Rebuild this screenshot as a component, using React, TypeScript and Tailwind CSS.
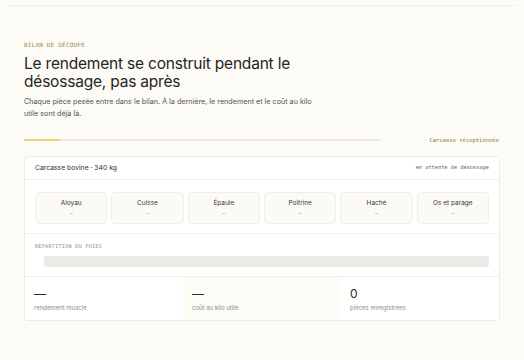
import React from "react";

const pieces = ["Aloyau", "Cuisse", "Épaule", "Poitrine", "Haché", "Os et parage"];

const stats = [
    { value: "—", label: "rendement muscle", bg: "bg-white" },
    { value: "—", label: "coût au kilo utile", bg: "bg-[#fcfbf6]" },
    { value: "0", label: "pièces enregistrées", bg: "bg-white" },
];

const sans = "font-['Inter','Noto_Sans',sans-serif]";
const mono = "font-['DejaVu_Sans_Mono','Liberation_Mono',monospace]";

export default function App() {
    return (
        <div className={`min-h-[360px] w-full bg-[#fcfbf5] ${sans}`}>
            <div className="mx-2 h-[6px] border-b border-[#f1efe6]" />
            <div className="px-6 pt-[34px]">
                <p className={`${mono} text-[6px] tracking-[0.2px] text-[#9c8b4f]`}>
                    BILAN DE DÉCOUPE
                </p>
                <h1 className="mt-[6px] max-w-[300px] text-[15.5px] leading-[18px] tracking-[-0.2px] text-[#262521]">
                    Le rendement se construit pendant le désossage, pas après
                </h1>
                <p className="mt-[5px] max-w-[300px] text-[7.2px] leading-[11.5px] text-[#55534c]">
                    Chaque pièce pesée entre dans le bilan. À la dernière, le
                    rendement et le coût au kilo utile sont déjà là.
                </p>

                <div className="mt-[17px] flex items-center">
                    <div className="h-[2px] w-3/4 rounded-full bg-[#ece9dc]">
                        <div className="h-full w-[10%] rounded-full bg-[#e6d37a]" />
                    </div>
                    <span className={`${mono} ml-auto mr-[1px] text-[5.5px] text-[#8a7a2e]`}>
                        Carcasse réceptionnée
                    </span>
                </div>

                <div className="mt-[12px] overflow-hidden rounded-[4px] border border-[#eeebe2] bg-white">
                    <div className="flex h-[23px] items-center justify-between border-b border-[#f3f1ea] px-[10px]">
                        <span className="text-[6.8px] text-[#33322d]">
                            Carcasse bovine · 340 kg
                        </span>
                        <span className={`${mono} text-[5.3px] text-[#66645c]`}>
                            en attente de désossage
                        </span>
                    </div>

                    <div className="grid grid-cols-6 gap-[4px] border-b border-[#f3f1ea] px-[10px] pt-[12px] pb-[9px]">
                        {pieces.map(name => (
                            <div
                                key={name}
                                className="flex h-[32px] flex-col items-center justify-center rounded-[4px] border border-[#f1eee5] bg-[#fbfaf6]"
                            >
                                <span className="text-[6.5px] leading-[9px] text-[#3a3934]">
                                    {name}
                                </span>
                                <span className="text-[6px] leading-[9px] text-[#a8a69e]">–</span>
                            </div>
                        ))}
                    </div>

                    <div className="border-b border-[#f3f1ea] px-[10px] pt-[9px] pb-[9px]">
                        <p className={`${mono} text-[5px] tracking-[0.35px] text-[#8c8a82]`}>
                            RÉPARTITION DU POIDS
                        </p>
                        <div className="mt-[5px] ml-[9px] h-[11px] rounded-[3px] bg-[#ebeae5]" />
                    </div>

                    <div className="grid grid-cols-3">
                        {stats.map(s => (
                            <div key={s.label} className={`${s.bg} h-[43px] px-[9px] pt-[10px]`}>
                                <div className="text-[12px] leading-[14px] text-[#2b2a26]">
                                    {s.value}
                                </div>
                                <div className="mt-[2px] text-[6px] text-[#8e8c84]">
                                    {s.label}
                                </div>
                            </div>
                        ))}
                    </div>
                </div>
            </div>
        </div>
    );
}
